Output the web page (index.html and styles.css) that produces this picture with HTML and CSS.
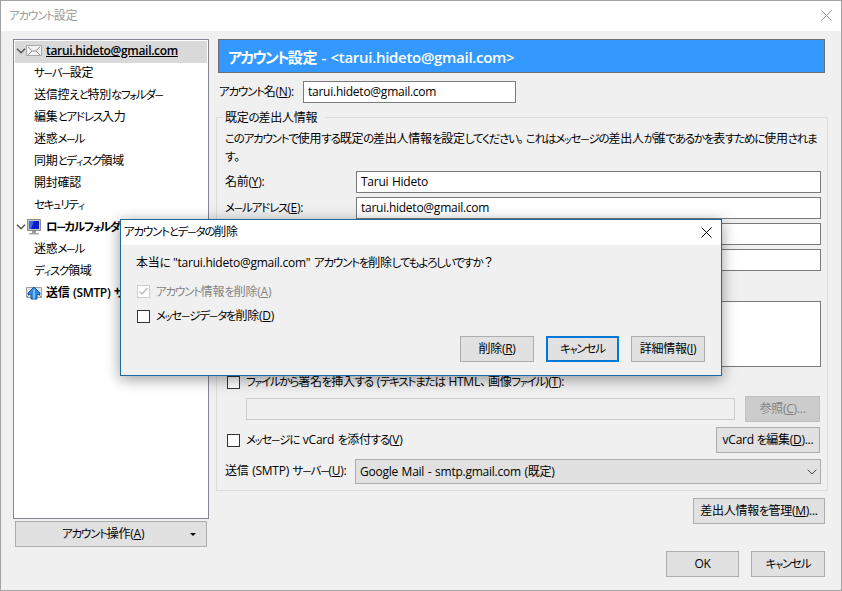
FILE: index.html
```
<!DOCTYPE html>
<html lang="ja">
<head>
    <meta charset="UTF-8">
    <title>アカウント設定</title>
    <link rel="stylesheet" href="styles.css">
</head>
<body>
<div class="window">
    <div class="titlebar">
        <span>アカウント設定</span>
        <svg class="close" width="11" height="11" viewBox="0 0 11 11"><path d="M.5.5l10 10M10.5.5l-10 10"/></svg>
    </div>
    <div class="content">
        <div class="side">
            <ul class="tree">
                <li class="root current">
                    <svg class="arrow" width="10" height="6" viewBox="0 0 10 6"><path d="M1 .8l4 4 4-4"/></svg>
                    <svg class="icon" width="16" height="16" viewBox="0 0 16 16"><path d="M.5 2.500h15v10H.5z" fill="#f4f4f4" stroke="#a8a8a8"/><path d="M2 4l4.500 4h3L14 4M2 12l4-4M14 12l-4-4" fill="none" stroke="#8c8c8c"/></svg>
                    <span>tarui.hideto@gmail.com</span>
                </li>
                <li>サーバー設定</li>
                <li>送信控えと特別なフォルダー</li>
                <li>編集とアドレス入力</li>
                <li>迷惑メール</li>
                <li>同期とディスク領域</li>
                <li>開封確認</li>
                <li>セキュリティ</li>
                <li class="root">
                    <svg class="arrow" width="10" height="6" viewBox="0 0 10 6"><path d="M1 .8l4 4 4-4"/></svg>
                    <svg class="icon" width="16" height="16" viewBox="0 0 16 16"><path d="M1.500.5h13v11h-13z" fill="#c8c8c8" stroke="#8a8a8a"/><path d="M3 2h10v8H3z" fill="#0a1ec8"/><path d="M3 2h5L5 10H3z" fill="#3c64f0"/><path d="M6 12h4v2H6z" fill="#999"/><path d="M3 14h10v1.500H3z" fill="#aaa"/></svg>
                    <span>ローカルフォルダー</span>
                </li>
                <li>迷惑メール</li>
                <li>ディスク領域</li>
                <li class="root">
                    <span class="arrow"></span>
                    <svg class="icon" width="16" height="16" viewBox="0 0 16 16"><path d="M.5 2.500h15v10H.5z" fill="#e4e4e4" stroke="#a0a0a0"/><path d="M1 12l4-4M15 12l-4-4" stroke="#8c8c8c"/><path d="M8 2L2 8v1.500h3V14h6V9.500h3V8z" fill="#2f86e0" stroke="#1459a8"/><path d="M8 4.500v9" stroke="#7cc0ff" stroke-width="2"/></svg>
                    <span>送信 (SMTP) サーバー</span>
                </li>
            </ul>
            <button class="btn action"><span>アカウント操作(<u>A</u>)</span><i class="drop"></i></button>
        </div>
        <div class="main">
            <h1>アカウント設定 - &lt;tarui.hideto@gmail.com&gt;</h1>
            <div class="row name">
                <label>アカウント名(<u>N</u>):</label>
                <div class="field">tarui.hideto@gmail.com</div>
            </div>
            <div class="group">
                <div class="legend">既定の差出人情報</div>
                <p>このアカウントで使用する既定の差出人情報を設定してください。これはメッセージの差出人が誰であるかを表すために使用されます。</p>
                <div class="row"><label>名前(<u>Y</u>):</label><div class="field">Tarui Hideto</div></div>
                <div class="row"><label>メールアドレス(<u>E</u>):</label><div class="field">tarui.hideto@gmail.com</div></div>
                <div class="row"><label></label><div class="field"></div></div>
                <div class="row"><label></label><div class="field"></div></div>
                <div class="signature"></div>
                <div class="check file"><i class="box"></i><span>ファイルから署名を挿入する (テキストまたは HTML、画像ファイル)(<u>T</u>):</span></div>
                <div class="browse">
                    <div class="field disabled"></div>
                    <button class="btn disabled">参照(<u>C</u>)...</button>
                </div>
                <div class="vcard">
                    <div class="check"><i class="box"></i><span>メッセージに vCard を添付する(<u>V</u>)</span></div>
                    <button class="btn">vCard を編集(<u>D</u>)...</button>
                </div>
                <div class="smtp">
                    <label>送信 (SMTP) サーバー(<u>U</u>):</label>
                    <div class="select"><span>Google Mail - smtp.gmail.com (既定)</span><svg width="10" height="6" viewBox="0 0 10 6"><path d="M.7.700l4.300 4.300L9.300.7"/></svg></div>
                </div>
            </div>
            <button class="btn manage">差出人情報を管理(<u>M</u>)...</button>
            <div class="buttons">
                <button class="btn ok">OK</button>
                <button class="btn">キャンセル</button>
            </div>
        </div>
    </div>
</div>
<div class="dialog">
    <div class="dialog-title">
        <span>アカウントとデータの削除</span>
        <svg class="close" width="11" height="11" viewBox="0 0 11 11"><path d="M.5.5l10 10M10.5.5l-10 10"/></svg>
    </div>
    <div class="dialog-body">
        <div class="question">本当に "tarui.hideto@gmail.com" アカウントを削除してもよろしいですか？</div>
        <div class="check off"><i class="box"><svg width="11" height="11" viewBox="0 0 11 11"><path d="M1.500 5.500L4 8l5.500-6"/></svg></i><span>アカウント情報を削除(<u>A</u>)</span></div>
        <div class="check"><i class="box"></i><span>メッセージデータを削除(<u>D</u>)</span></div>
        <div class="dialog-buttons">
            <button class="btn">削除(<u>R</u>)</button>
            <button class="btn default">キャンセル</button>
            <button class="btn">詳細情報(<u>I</u>)</button>
        </div>
    </div>
</div>
<script>
    //かな部分だけ字間を詰める
    function wrapKana(node) {
        if (node.nodeType == 3) {
            if (!/[ぁ-ヿ]/.test(node.nodeValue)) return;
            var box = document.createElement("span");
            box.innerHTML = node.nodeValue.replace(/</g, "&lt;")
                .replace(/[ーッャュィァォ]+|[ぁ-ヿ]/g, function (s) {
                    return /[ーッャュィァォ]/.test(s) ? "{" + s + "}" : "[" + s + "]";
                })
                .replace(/\]\[/g, "")
                .replace(/\{/g, '<span class="kana small">')
                .replace(/\[/g, '<span class="kana">')
                .replace(/[\]}]/g, "</span>")
                .replace(/[、。]/g, '<span class="mark">$&</span>');
            node.parentNode.replaceChild(box, node);
            return;
        }
        var list = Array.prototype.slice.call(node.childNodes);
        for (var i = 0; i < list.length; i++) {
            wrapKana(list[i]);
        }
    }

    wrapKana(document.querySelector(".window"));
    wrapKana(document.querySelector(".dialog"));
</script>
</body>
</html>
```
FILE: styles.css
```
* {
    margin: 0;
    padding: 0;
    box-sizing: border-box;
}

body {
    width: 842px;
    height: 591px;
    overflow: hidden;
    position: relative;
    font: 12px/16px "Open Sans", "Noto Sans CJK JP", sans-serif;
    letter-spacing: -.25px;
    word-spacing: .8px;
    color: #000;
}

.kana {
    font-size: 11.5px;
    letter-spacing: -1.2px;
    font-feature-settings: "palt";
}

.kana.small {
    font-size: 9.5px;
    letter-spacing: -1.1px;
}

.mark {
    letter-spacing: -4px;
}

.window {
    height: 591px;
    border: 1px solid #a3a3a3;
    background-color: #f0f0f0;
}

.titlebar {
    height: 30px;
    padding: 0 9px 1px 8px;
    display: flex;
    justify-content: space-between;
    align-items: center;
    background-color: #fff;
    color: #999;
}

.close {
    fill: none;
    stroke: #000;
}

.titlebar .close {
    stroke: #999;
}

.content {
    display: flex;
    padding: 8px 0 0 12px;
}

.side {
    width: 196px;
}

.tree {
    height: 480px;
    padding: 1px;
    border: 1px solid #828790;
    background-color: #fff;
    list-style: none;
}

.tree li {
    height: 22px;
    padding-left: 19px;
    line-height: 20px;
    white-space: nowrap;
}

.tree .root {
    display: flex;
    align-items: center;
    padding: 0 0 2px 1px;
    font-weight: 600;
    letter-spacing: -.33px;
}

.tree .root .kana {
    letter-spacing: -1.2px;
}

.tree .current {
    background-color: #d9d9d9;
}

.current span {
    text-decoration: underline;
}

.arrow {
    width: 10px;
    fill: none;
    stroke: #555;
    stroke-width: 1.5;
}

.icon {
    margin: 0 4px 0 0;
}

.btn {
    height: 26px;
    border: 1px solid #adadad;
    background-color: #e1e1e1;
    font: inherit;
    letter-spacing: inherit;
    color: #000;
    text-align: center;
    white-space: nowrap;
}

.action {
    display: flex;
    align-items: center;
    width: 192px;
    margin: 2px 0 0 2px;
    padding: 0 10px 0 46px;
    justify-content: space-between;
}

.drop {
    border: 3px solid transparent;
    border-top-color: #000;
    border-bottom: 0;
}

.main {
    width: 612px;
    margin-left: 7px;
}

h1 {
    width: 607px;
    height: 34px;
    margin-left: 2px;
    padding-left: 9px;
    border: 1px solid #6d6d6d;
    background-color: #39f;
    font-size: 15px;
    font-weight: 600;
    letter-spacing: -.3px;
    line-height: 35px;
    color: #fff;
}

h1 .kana {
    font-size: 15px;
    letter-spacing: -1.7px;
}

.row {
    display: flex;
    align-items: center;
    height: 22px;
    margin-bottom: 4px;
}

.row label {
    width: 131px;
}

.field {
    flex: 1;
    height: 22px;
    padding-left: 4px;
    border: 1px solid #7a7a7a;
    background-color: #fff;
    line-height: 20px;
}

.name {
    margin: 8px 0 14px 3px;
}

.name label {
    width: 84px;
}

.name .field {
    flex: none;
    width: 213px;
}

.group {
    height: 374px;
    padding: 0 6px 0 8px;
    border: 1px solid #dcdcdc;
}

.legend {
    width: 102px;
    height: 16px;
    margin: -8px 0 0 -2px;
    padding-left: 2px;
    background-color: #f0f0f0;
    white-space: nowrap;
}

.group p {
    height: 34px;
    margin: 4px 0 7px;
    line-height: 17px;
}

.signature {
    height: 66px;
    margin: 30px 0 9px 131px;
    border: 1px solid #7a7a7a;
    background-color: #fff;
}

.check {
    display: flex;
    align-items: center;
    height: 13px;
    white-space: nowrap;
}

.box {
    width: 13px;
    height: 13px;
    margin-right: 6px;
    border: 1px solid #333;
    background-color: #fff;
}

.box svg {
    display: block;
    fill: none;
    stroke: #bbb;
    stroke-width: 1.4;
}

.group .check {
    padding-left: 2px;
}

.browse {
    display: flex;
    align-items: center;
    height: 26px;
    margin: 7px 1px 5px 21px;
}

.browse .btn {
    width: 75px;
    margin-left: 10px;
}

.field.disabled {
    border-color: #ccc;
    background-color: #f0f0f0;
}

.btn.disabled {
    border-color: #bfbfbf;
    background-color: #ccc;
    color: #838383;
}

.vcard {
    display: flex;
    align-items: center;
    justify-content: space-between;
    height: 26px;
    margin: 0 1px 6px 0;
}

.vcard .btn {
    width: 104px;
}

.smtp {
    display: flex;
    align-items: center;
}

.smtp label {
    width: 130px;
}

.select {
    flex: 1;
    display: flex;
    align-items: center;
    justify-content: space-between;
    height: 25px;
    padding: 0 3px 0 4px;
    border: 1px solid #adadad;
    background-color: #e1e1e1;
}

.select svg {
    fill: none;
    stroke: #444;
}

.manage {
    display: block;
    width: 132px;
    margin: 7px 0 27px 477px;
}

.buttons {
    display: flex;
    gap: 12px;
    padding-left: 450px;
}

.buttons .btn {
    width: 74px;
}

.buttons .ok {
    width: 73px;
}

/* 確認ダイアログ */
.dialog {
    position: absolute;
    left: 120px;
    top: 219px;
    width: 602px;
    height: 157px;
    border: 1px solid #1c69a5;
    background-color: #f0f0f0;
    box-shadow: 0 3px 14px rgba(0, 0, 0, .4);
}

.dialog-title {
    height: 25px;
    padding: 0 9px 0 3px;
    display: flex;
    justify-content: space-between;
    align-items: center;
    background-color: #fff;
}

.dialog-body {
    padding: 10px 16px 0 15px;
}

.question {
    margin-bottom: 14px;
}

.dialog .check {
    margin: 0 0 12px 1px;
}

.off {
    color: #838383;
}

.off .box {
    border-color: #ccc;
}

.dialog-buttons {
    display: flex;
    justify-content: flex-end;
    gap: 12px;
    margin-top: 13px;
}

.dialog-buttons .btn {
    width: 74px;
}

.dialog-buttons .default {
    width: 73px;
    border: 2px solid #0078d7;
}
```
